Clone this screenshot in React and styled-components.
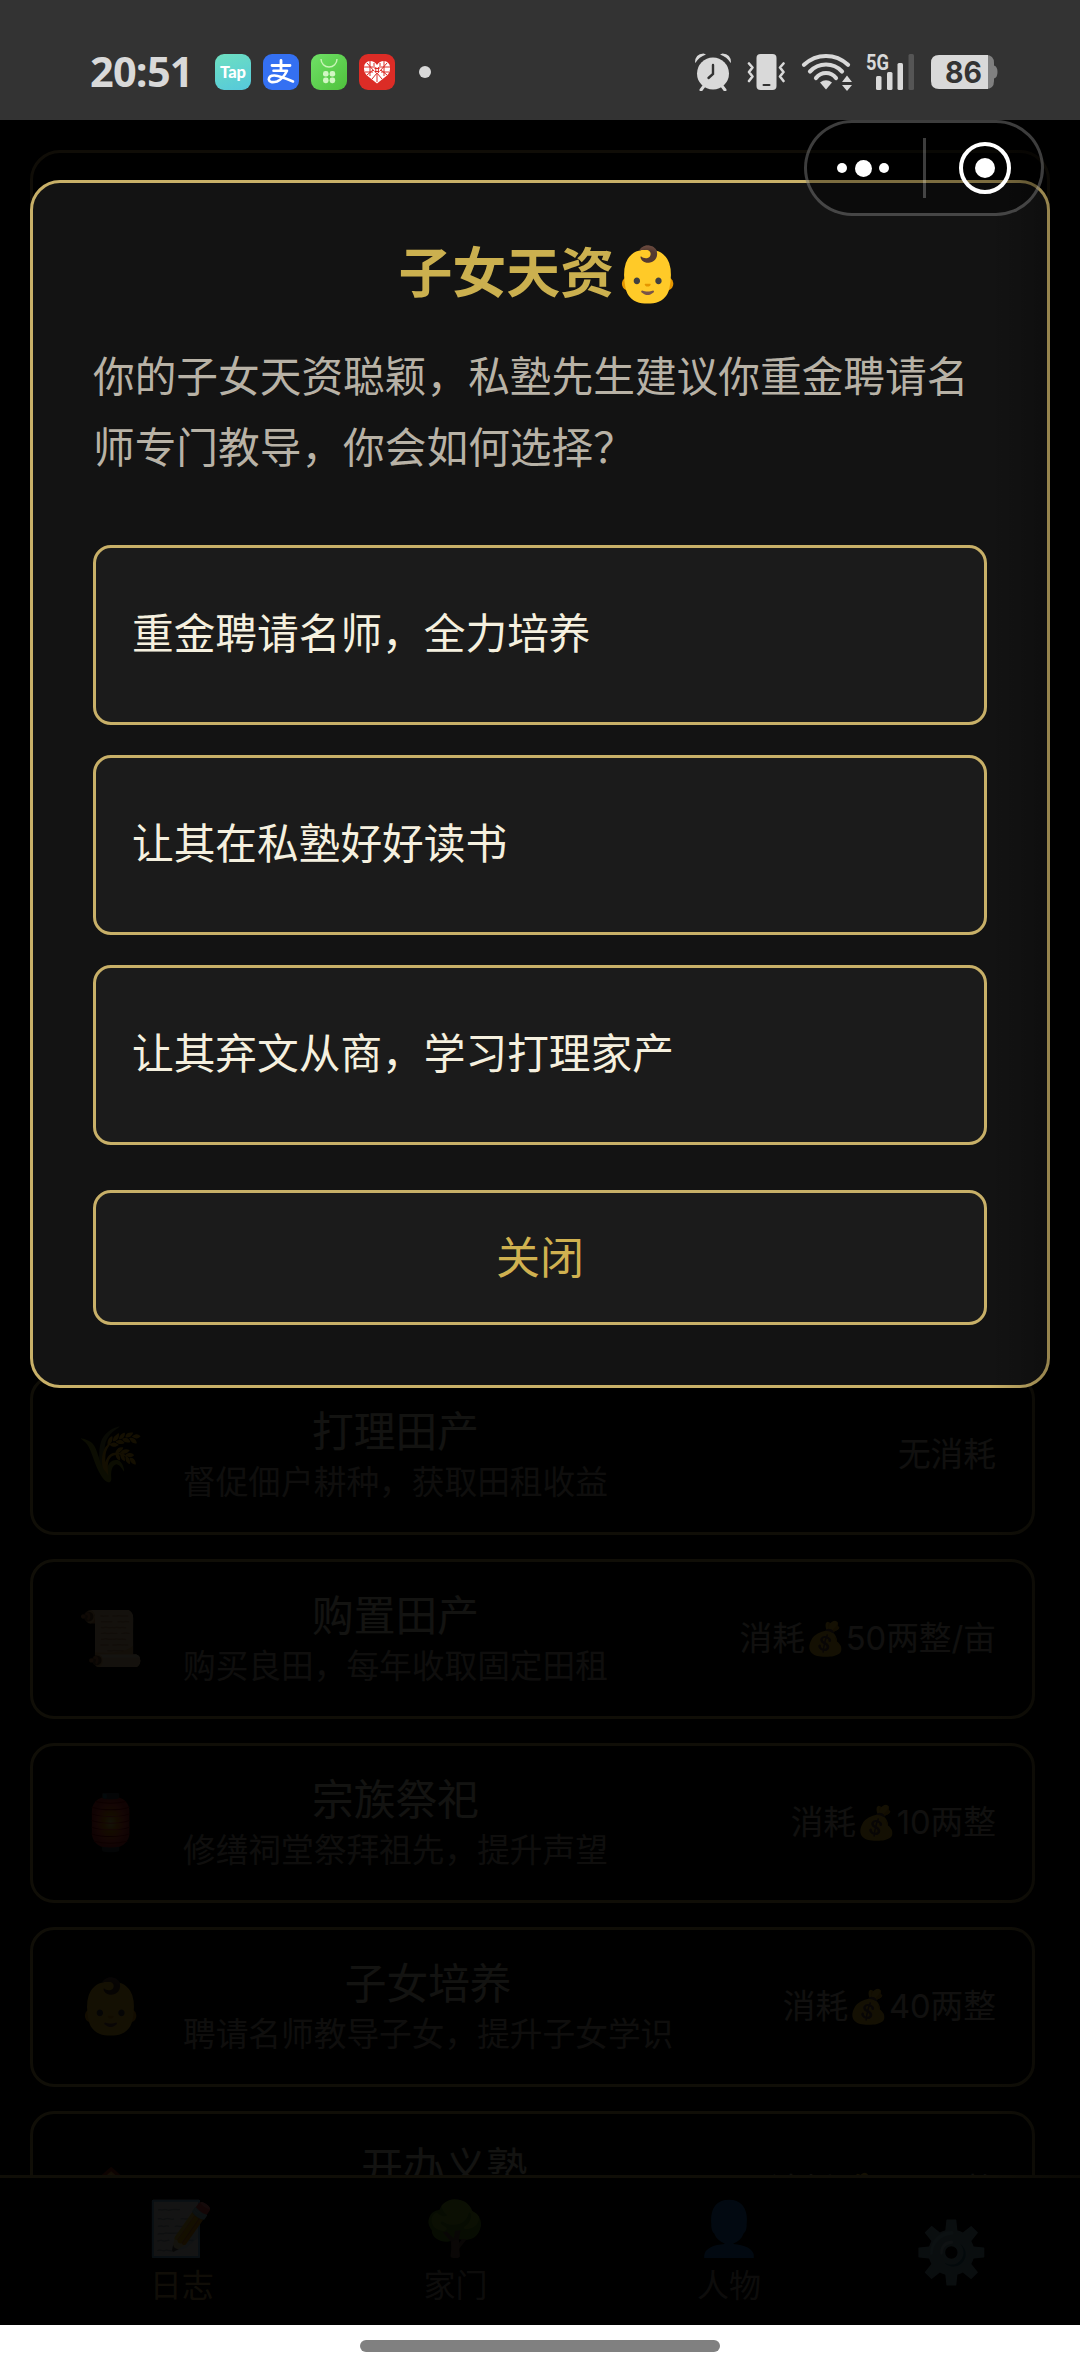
import React from "react";
import styled, { createGlobalStyle } from "styled-components";

const GlobalStyle = createGlobalStyle`
  * {
    box-sizing: border-box;
  }

  body {
    margin: 0;
    background: #000;
    font-family: "Noto Sans CJK SC", "Noto Color Emoji", sans-serif;
  }
`;

const Screen = styled.div`
  display: flex;
  flex-direction: column;
  width: 1080px;
  height: 2373px;
  overflow: hidden;
`;

const StatusBar = styled.header`
  display: flex;
  align-items: center;
  justify-content: space-between;
  flex: none;
  height: 120px;
  padding: 24px 82px 0 90px;
  background: #333;
  color: #d9d9d9;
`;

const StatusGroup = styled.div`
  display: flex;
  align-items: center;
  gap: ${({ $gap }) => $gap || 0}px;
`;

const Clock = styled.span`
  width: 113px;
  padding-bottom: 3px;
  font: 700 41.5px/48px "Open Sans", sans-serif;
  letter-spacing: -0.8px;
`;

const AppIcon = styled.span`
  display: flex;
  align-items: center;
  justify-content: center;
  width: 36px;
  height: 36px;
  border-radius: 9px;
  background: ${({ $bg }) => $bg};
  color: #fff;
  font: ${({ $font }) => $font || "inherit"};
`;

const MoreDot = styled.span`
  width: 12px;
  height: 12px;
  margin-left: 12px;
  border-radius: 50%;
  background: #d9d9d9;
`;

const Viewport = styled.main`
  position: relative;
  display: flex;
  flex-direction: column;
  flex: none;
  height: 2205px;
  overflow: hidden;
  background: #000;
`;

const List = styled.section`
  display: flex;
  flex-direction: column;
  gap: 24px;
  flex: none;
  height: 2055px;
  padding: 30px 45px 0 30px;
  overflow: hidden;
`;

const Panel = styled.div`
  flex: none;
  width: 1020px;
  height: 1201px;
  border: 3px solid #c9a85c;
  border-radius: 30px;
`;

const Card = styled.div`
  display: flex;
  align-items: center;
  flex: none;
  height: 160px;
  padding: 0 36px 9px 45px;
  border: 3px solid #c9b05c;
  border-radius: 24px;
  background: #020809;
`;

const CardIcon = styled.span`
  display: flex;
  align-items: center;
  justify-content: center;
  width: 66px;
  height: 66px;
  margin: 0 39px 2px 0;
  font-size: 54px;
  line-height: 66px;
`;

const CardText = styled.div`
  display: flex;
  flex-direction: column;
  align-items: center;
  color: #f0e8d8;
`;

const CardTitle = styled.div`
  font-size: 41.7px;
  line-height: 58px;
`;

const CardNote = styled.div`
  font-size: 32.7px;
  line-height: 43px;
  color: #b8b2a6;
`;

const Cost = styled.div`
  margin: 7px 0 0 auto;
  color: #d0cabc;
  font-family: Inter, "Noto Sans CJK SC", "Noto Color Emoji", sans-serif;
  font-size: 32.7px;
  line-height: 46px;
`;

const TabBar = styled.nav`
  display: flex;
  flex: none;
  height: 150px;
  padding: 0 43px 0 45px;
  border-top: 3px solid #c9b05c;
`;

const Tab = styled.div`
  display: flex;
  flex-direction: column;
  align-items: center;
  width: 273.6px;
  padding-top: 12px;
  color: ${({ $active }) => ($active ? "#c9a85c" : "#a09a90")};
  font-size: 32px;
  line-height: 42px;
`;

const TabIcon = styled.span`
  height: 72px;
  font-size: 53px;
  line-height: 69px;
`;

const Gear = styled.div`
  display: flex;
  flex: 1;
  align-items: center;
  justify-content: center;
  padding-bottom: 10px;
  font-size: 60px;
`;

const Mask = styled.div`
  position: absolute;
  inset: 0;
  padding: 60px 30px;
  background: rgba(0, 0, 0, 0.92);
`;

const Dialog = styled.div`
  display: flex;
  flex-direction: column;
  height: 1208px;
  padding: 60px;
  border: 3px solid #c8b068;
  border-radius: 30px;
  background: #131313;
`;

const DialogTitle = styled.h2`
  margin: 0;
  height: 61px;
  color: #cbb04f;
  font-size: 54px;
  font-weight: 700;
  line-height: 54px;
  text-align: center;
`;

const DialogText = styled.p`
  height: 142px;
  margin: 35px 0 64px;
  color: #b8b2a6;
  font-size: 41.7px;
  line-height: 71px;
`;

const Options = styled.div`
  display: flex;
  flex-direction: column;
  gap: 30px;
`;

const Option = styled.button`
  height: 180px;
  padding: 0 36px 8px;
  border: 3px solid #c8b068;
  border-radius: 18px;
  background: #1b1b1b;
  color: #f5f0df;
  font: inherit;
  font-size: 41.7px;
  text-align: left;
`;

const CloseButton = styled(Option)`
  height: 135px;
  margin-top: 45px;
  padding-bottom: 6px;
  color: #d0b150;
  font-size: 44px;
  text-align: center;
`;

const EdgeShade = styled.div`
  position: absolute;
  top: 0;
  right: 0;
  bottom: 0;
  width: 90px;
  background: linear-gradient(to right, transparent, rgba(0, 0, 0, 0.38));
`;

const Capsule = styled.div`
  position: absolute;
  top: 0;
  right: 36px;
  display: flex;
  align-items: center;
  width: 240px;
  height: 96px;
  border: 3px solid rgba(255, 255, 255, 0.24);
  border-radius: 48px;
  background: rgba(0, 0, 0, 0.38);
`;

const CapsuleHalf = styled.div`
  display: flex;
  flex: 1;
  align-items: center;
  justify-content: center;
  gap: 7.5px;
  padding-right: 3px;

  & + & {
    height: 60px;
    padding: 0 0 0 3px;
    border-left: 3px solid rgba(255, 255, 255, 0.24);
  }
`;

const Dot = styled.span`
  width: ${({ $size }) => $size}px;
  height: ${({ $size }) => $size}px;
  border-radius: 50%;
  background: #fff;
`;

const Ring = styled.span`
  display: flex;
  align-items: center;
  justify-content: center;
  width: 52px;
  height: 52px;
  border: 4.5px solid #fff;
  border-radius: 50%;
`;

const HomeBar = styled.footer`
  display: flex;
  justify-content: center;
  flex: none;
  height: 48px;
  padding-top: 15px;
  background: #fff;
`;

const HomePill = styled.span`
  width: 360px;
  height: 12px;
  border-radius: 6px;
  background: #808080;
`;

const actions = [
  { icon: "🌾", title: "打理田产", note: "督促佃户耕种，获取田租收益", cost: "无消耗" },
  { icon: "📜", title: "购置田产", note: "购买良田，每年收取固定田租", cost: "消耗💰50两整/亩" },
  { icon: "🏮", title: "宗族祭祀", note: "修缮祠堂祭拜祖先，提升声望", cost: "消耗💰10两整" },
  { icon: "👶", title: "子女培养", note: "聘请名师教导子女，提升子女学识", cost: "消耗💰40两整" },
  { icon: "🏫", title: "开办义塾", note: "出资开办义塾，教化乡里，提升声望", cost: "消耗💰100两整" }
];

const tabs = [
  { icon: "📝", label: "日志", active: true },
  { icon: "🌳", label: "家门" },
  { icon: "👤", label: "人物" }
];

const options = [
  "重金聘请名师，全力培养",
  "让其在私塾好好读书",
  "让其弃文从商，学习打理家产"
];

const PayIcon = () => (
  <svg width="36" height="36" viewBox="0 0 36 36" fill="none" stroke="#fff" strokeLinecap="round">
    <path d="M9 11.500h18M18 6.500v10" strokeWidth="2.800" />
    <path
      d="M10.500 16.800H24Q20 25 14 27.500 6.500 29.500 5.800 25.500 6 21.300 11.500 21.500 17 22 30 27.500"
      strokeWidth="2.600"
      strokeLinejoin="round"
    />
  </svg>
);

const BagIcon = () => (
  <svg width="36" height="36" viewBox="0 0 36 36" fill="none">
    <path d="M10 5a8 8 0 0 0 16 0" stroke="#c9f5b8" strokeWidth="1.4" />
    <g fill="#d2f7c4">
      <rect x="12" y="17" width="5.6" height="5.6" rx="2.4" />
      <rect x="18.6" y="17" width="5.6" height="5.6" rx="2.4" />
      <rect x="12" y="23.6" width="5.6" height="5.6" rx="2.4" />
      <rect x="18.6" y="23.6" width="5.6" height="5.6" rx="2.4" />
    </g>
  </svg>
);

const HeartIcon = () => (
  <svg width="36" height="36" viewBox="0 0 36 36" fill="none">
    <path
      d="M18 29.500 8 21.500Q4.500 18 5 12.500 6 7.500 11 7q4.500 0 7 4 2.500-4 7-4 5 .5 6 5.500.5 5.500-3 9z"
      fill="#fff"
    />
    <path
      d="M11 7v15M25 7v15M5 13h9M22 13h9M6 18h8M22 18h8M8 9l7 8M28 9l-7 8M15 9v5M21 9v5M13 25l5-6 5 6M18 20v8M8 21l6-5M28 21l-6-5M15.500 14.500h5M15.500 17.500h5M16.800 13v6M19.400 13v6"
      stroke="#dc2c26"
      strokeWidth="1"
    />
  </svg>
);

const AlarmIcon = () => (
  <svg width="38" height="38" viewBox="0 0 38 38" fill="none">
    <circle cx="19" cy="20.500" r="16" fill="#d9d9d9" />
    <path d="M10 33l-3 4M28 33l3 4" stroke="#d9d9d9" strokeWidth="3" strokeLinecap="round" />
    <path d="M1 9.500Q1 1 9.500.5l2.500 1Q5 4 1.500 9.800zM37 9.500Q37 1 28.500.5l-2.500 1Q33 4 36.500 9.800z" fill="#d9d9d9" />
    <path d="M19 12v9l-4.500 4" stroke="#333" strokeWidth="2.400" strokeLinecap="round" />
  </svg>
);

const VibrateIcon = () => (
  <svg width="38" height="38" viewBox="0 0 38 38" fill="none">
    <rect x="9.500" y="1" width="20" height="36" rx="4" fill="#d9d9d9" />
    <path d="M16.500 32h6" stroke="#333" strokeWidth="2" strokeLinecap="round" />
    <path
      d="M2 10.500l3.500 4-3.500 4.500 3.500 4.500L2 28M36.500 10.500l-3.500 4 3.500 4.500-3.500 4.500 3.500 4.500"
      stroke="#d9d9d9"
      strokeWidth="2.600"
      strokeLinecap="round"
      strokeLinejoin="round"
    />
  </svg>
);

const WifiIcon = () => (
  <svg width="51" height="38" viewBox="-1.500 0 51 38" fill="none" overflow="visible">
    <g stroke="#d9d9d9" strokeWidth="4.200" strokeLinecap="round">
      <path d="M2.500 11.800Q12 3 24.500 3t22 8.800" />
      <path d="M8.500 18.500Q15 11.500 24.500 11.500t16 7" />
      <path d="M14.500 25Q18.500 20 24.500 20t10 5" />
    </g>
    <path d="M24.500 36.500l-6-7Q24.500 25 30.500 29.500z" fill="#d9d9d9" />
    <path d="M40.500 29l5-6.500 5 6.500zM40.500 32l5 6 5-6z" fill="#d9d9d9" />
  </svg>
);

const SignalIcon = () => (
  <svg width="50" height="38" viewBox="0 0 50 38">
    <text x="0" y="16.500" fill="#d9d9d9" fontFamily="Roboto" fontSize="22" fontWeight="700" textLength="23" lengthAdjust="spacingAndGlyphs">
      5G
    </text>
    <g fill="#d9d9d9">
      <rect x="10" y="23" width="5.500" height="14" rx="1.500" />
      <rect x="21" y="19" width="5.500" height="18" rx="1.500" />
      <rect x="31.500" y="10" width="5.500" height="27" rx="1.500" />
      <rect x="42.500" y="1" width="5.500" height="36" rx="1.500" fill="#555" />
    </g>
  </svg>
);

const BatteryIcon = () => (
  <svg width="67" height="34" viewBox="0 0 67 34">
    <path d="M50 0h5q8 0 8 8v2.500q3.500 1 3.500 6.500T63 23.500V26q0 8-8 8h-5z" fill="#808080" />
    <path d="M8 0h49v34H8q-8 0-8-8V8q0-8 8-8z" fill="#d9d9d9" />
    <text x="32.500" y="28" fill="#333" fontFamily="Inter" fontSize="30" fontWeight="700" textAnchor="middle" textLength="37" lengthAdjust="spacingAndGlyphs">
      86
    </text>
  </svg>
);

const App = () => {
  return (
    <Screen>
      <GlobalStyle />
      <StatusBar>
        <StatusGroup $gap={12}>
          <Clock>20:51</Clock>
          <AppIcon $bg="linear-gradient(160deg, #6ee0c0, #55c8dc)" $font="900 16.5px/1 Lato, sans-serif">
            Tap
          </AppIcon>
          <AppIcon $bg="#3470f2">
            <PayIcon />
          </AppIcon>
          <AppIcon $bg="linear-gradient(135deg, #6fe066, #4fc23c)">
            <BagIcon />
          </AppIcon>
          <AppIcon $bg="#dc2c26">
            <HeartIcon />
          </AppIcon>
          <MoreDot />
        </StatusGroup>
        <StatusGroup $gap={15}>
          <AlarmIcon />
          <VibrateIcon />
          <WifiIcon />
          <SignalIcon />
          <BatteryIcon />
        </StatusGroup>
      </StatusBar>

      <Viewport>
        <List>
          <Panel />
          {actions.map(d => {
            return (
              <Card key={d.title}>
                <CardIcon>{d.icon}</CardIcon>
                <CardText>
                  <CardTitle>{d.title}</CardTitle>
                  <CardNote>{d.note}</CardNote>
                </CardText>
                <Cost>{d.cost}</Cost>
              </Card>
            );
          })}
        </List>
        <TabBar>
          {tabs.map(d =>
            <Tab key={d.label} $active={d.active}>
              <TabIcon>{d.icon}</TabIcon>
              {d.label}
            </Tab>
          )}
          <Gear>⚙️</Gear>
        </TabBar>

        <Mask>
          <Dialog>
            <DialogTitle>子女天资👶</DialogTitle>
            <DialogText>
              你的子女天资聪颖，私塾先生建议你重金聘请名师专门教导，你会如何选择？
            </DialogText>
            <Options>
              {options.map(text => <Option key={text}>{text}</Option>)}
            </Options>
            <CloseButton>关闭</CloseButton>
          </Dialog>
        </Mask>
        <EdgeShade />

        <Capsule>
          <CapsuleHalf>
            <Dot $size={10} />
            <Dot $size={17} />
            <Dot $size={10} />
          </CapsuleHalf>
          <CapsuleHalf>
            <Ring>
              <Dot $size={20} />
            </Ring>
          </CapsuleHalf>
        </Capsule>
      </Viewport>

      <HomeBar>
        <HomePill />
      </HomeBar>
    </Screen>
  );
};

export default App;
